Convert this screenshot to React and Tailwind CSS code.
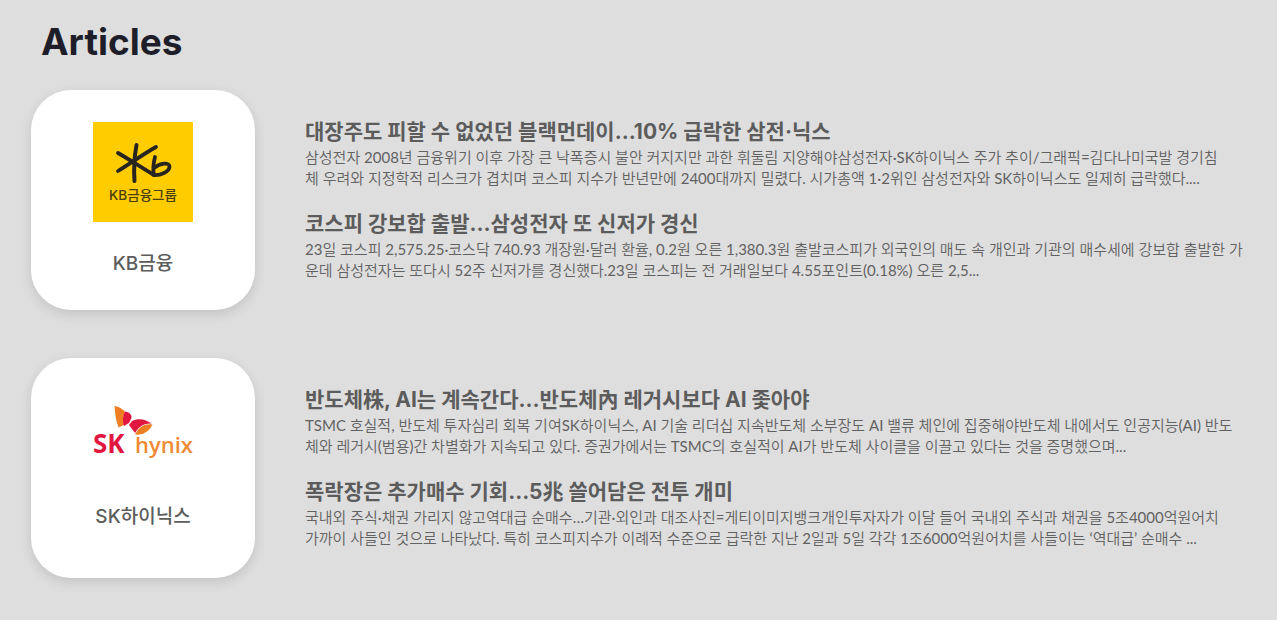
function KbLogo() {
  return (
    <svg viewBox="0 0 100 100" className="size-[100px]" role="img" aria-label="KB금융그룹">
      <rect width="100" height="100" fill="#ffcc00" />
      <g fill="none" stroke="#27251f" strokeLinecap="round" strokeLinejoin="round">
        <path d="M43.500 23C41.500 34 40.500 46 41.500 59" strokeWidth="4" />
        <path d="M25 31C34 36 46 44 61 53" strokeWidth="3.800" />
        <path d="M63 25C52 31 38 41 25 49" strokeWidth="3.800" />
        <path d="M62 35C60.500 41 59.500 47 61 53C67 53.500 76.500 50 76.500 44.500C76.500 40 67 41 61 46" strokeWidth="3.800" />
      </g>
      <text x="50" y="78" textAnchor="middle" fontSize="13.500" fontWeight="500" fill="#4a3d10" fontFamily="Inter, 'Noto Sans CJK KR', sans-serif">KB금융그룹</text>
    </svg>
  );
}

function SkLogo() {
  return (
    <svg viewBox="0 0 100 70" className="h-[70px] w-[100px]" role="img" aria-label="SK hynix">
      <path d="M21.500 1C26 2 29 3.500 32 6.500C30 10 30 15 31 20L25.500 22.500C23 16 22 9 21.500 1Z" fill="#ef7f22" />
      <path d="M32 6.500C36 7 38.500 9 38.500 13L36 18L31 21C29.500 17 29.500 11 32 6.500Z" fill="#e1173f" />
      <path d="M39 16C45 13 52 14 58.500 18.500C52 18 46 21 42 28L36 20Z" fill="#e1173f" />
      <path d="M59.500 19.500C53 18 46 21 42 29.500C49 30.500 56 27 59.500 19.500Z" fill="#ef7f22" />
      <text x="0" y="48" fontSize="26" fontWeight="700" fill="#e1173f" fontFamily="'Open Sans', sans-serif">SK</text>
      <text x="42" y="48" fontSize="22" fontWeight="600" fill="#ef8a35" fontFamily="'Open Sans', sans-serif">hynix</text>
    </svg>
  );
}

const companies = [
  {
    name: "KB금융",
    Logo: KbLogo,
    articles: [
      {
        title: "대장주도 피할 수 없었던 블랙먼데이…10% 급락한 삼전·닉스",
        lines: [
          "삼성전자 2008년 금융위기 이후 가장 큰 낙폭증시 불안 커지지만 과한 휘둘림 지양해야삼성전자·SK하이닉스 주가 추이/그래픽=김다나미국발 경기침",
          "체 우려와 지정학적 리스크가 겹치며 코스피 지수가 반년만에 2400대까지 밀렸다. 시가총액 1·2위인 삼성전자와 SK하이닉스도 일제히 급락했다....",
        ],
      },
      {
        title: "코스피 강보합 출발…삼성전자 또 신저가 경신",
        lines: [
          "23일 코스피 2,575.25·코스닥 740.93 개장원·달러 환율, 0.2원 오른 1,380.3원 출발코스피가 외국인의 매도 속 개인과 기관의 매수세에 강보합 출발한 가",
          "운데 삼성전자는 또다시 52주 신저가를 경신했다.23일 코스피는 전 거래일보다 4.55포인트(0.18%) 오른 2,5...",
        ],
      },
    ],
  },
  {
    name: "SK하이닉스",
    Logo: SkLogo,
    articles: [
      {
        title: "반도체株, AI는 계속간다…반도체內 레거시보다 AI 좇아야",
        lines: [
          "TSMC 호실적, 반도체 투자심리 회복 기여SK하이닉스, AI 기술 리더십 지속반도체 소부장도 AI 밸류 체인에 집중해야반도체 내에서도 인공지능(AI) 반도",
          "체와 레거시(범용)간 차별화가 지속되고 있다. 증권가에서는 TSMC의 호실적이 AI가 반도체 사이클을 이끌고 있다는 것을 증명했으며...",
        ],
      },
      {
        title: "폭락장은 추가매수 기회…5兆 쓸어담은 전투 개미",
        lines: [
          "국내외 주식·채권 가리지 않고역대급 순매수…기관·외인과 대조사진=게티이미지뱅크개인투자자가 이달 들어 국내외 주식과 채권을 5조4000억원어치",
          "가까이 사들인 것으로 나타났다. 특히 코스피지수가 이례적 수준으로 급락한 지난 2일과 5일 각각 1조6000억원어치를 사들이는 ‘역대급’ 순매수 ...",
        ],
      },
    ],
  },
];

function Article({ title, lines }) {
  return (
    <article>
      <h2 className="font-['Inter','Noto_Sans_CJK_KR',sans-serif] text-[21px] leading-[30px] font-bold">{title}</h2>
      <p className="font-['Lato','Noto_Sans_CJK_KR_DemiLight','Noto_Sans_CJK_KR',sans-serif] text-[15px] leading-[21px] text-[#626262]">
        {lines[0]}
        <br />
        {lines[1]}
      </p>
    </article>
  );
}

export default function App() {
  return (
    <main
      lang="ko"
      className="min-h-screen bg-[#dedede] pt-[15px] pr-5 pb-[42px] pl-[31px] font-['Inter','Noto_Sans_CJK_KR',sans-serif] text-[#5c5c5c]"
    >
      <h1 className="mb-[21px] pl-[10px] text-[37px] leading-[54px] font-bold text-[#1e1e2a]">Articles</h1>
      <div className="flex flex-col gap-12">
        {companies.map(({ name, Logo, articles }) => (
          <section key={name} className="flex items-center gap-[50px]">
            <div className="flex h-[220px] w-56 shrink-0 flex-col items-center justify-center gap-7 rounded-[40px] bg-white shadow-[0_4px_12px_rgba(0,0,0,0.12)]">
              <Logo />
              <span className="text-[19px] leading-7 font-medium">{name}</span>
            </div>
            <div className="flex min-w-0 flex-1 flex-col gap-5 pb-0.5">
              {articles.map((article) => (
                <Article key={article.title} {...article} />
              ))}
            </div>
          </section>
        ))}
      </div>
    </main>
  );
}
